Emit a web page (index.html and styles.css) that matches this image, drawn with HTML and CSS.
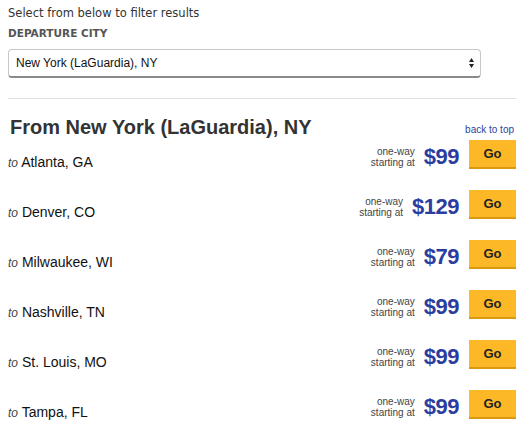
FILE: index.html
```html
<!DOCTYPE html>
<html>
<head>
<meta charset="utf-8">
<link rel="stylesheet" href="styles.css">
</head>
<body>
<div class="page">
  <p class="intro">Select from below to filter results</p>
  <div class="label">DEPARTURE CITY</div>
  <div class="select">
    <span>New York (LaGuardia), NY</span>
    <svg class="arrows" width="5" height="10" viewBox="0 0 5 10"><path d="M2.5 0 L5 4 L0 4 Z M0 6 L5 6 L2.5 10 Z" fill="#222"/></svg>
  </div>
  <hr class="rule">
  <div class="head">
    <h2>From New York (LaGuardia), NY</h2>
    <a class="top">back to top</a>
  </div>
  <ul class="list">
    <li class="row"><span class="dest"><i>to</i> Atlanta, GA</span><span class="fare"><span class="note">one-way<br>starting at</span><span class="price">$99</span><span class="go">Go</span></span></li>
    <li class="row"><span class="dest"><i>to</i> Denver, CO</span><span class="fare"><span class="note">one-way<br>starting at</span><span class="price">$129</span><span class="go">Go</span></span></li>
    <li class="row"><span class="dest"><i>to</i> Milwaukee, WI</span><span class="fare"><span class="note">one-way<br>starting at</span><span class="price">$79</span><span class="go">Go</span></span></li>
    <li class="row"><span class="dest"><i>to</i> Nashville, TN</span><span class="fare"><span class="note">one-way<br>starting at</span><span class="price">$99</span><span class="go">Go</span></span></li>
    <li class="row"><span class="dest"><i>to</i> St. Louis, MO</span><span class="fare"><span class="note">one-way<br>starting at</span><span class="price">$99</span><span class="go">Go</span></span></li>
    <li class="row"><span class="dest"><i>to</i> Tampa, FL</span><span class="fare"><span class="note">one-way<br>starting at</span><span class="price">$99</span><span class="go">Go</span></span></li>
  </ul>
</div>
</body>
</html>
```
FILE: styles.css
```css
html, body { margin: 0; padding: 0; background: #fff; }
body { font-family: "Liberation Sans", Arial, sans-serif; color: #222; }
.page { padding: 5px 15px 0 8px; }
.intro { margin: 0; font-family: "DejaVu Sans", Verdana, sans-serif; font-size: 11.5px; color: #333; line-height: 16px; }
.label { margin-top: 5px; font-family: "DejaVu Sans", Verdana, sans-serif; font-size: 10.5px; font-weight: bold; color: #555; line-height: 14px; }
.select { margin-top: 9px; width: 464px; height: 26px; border: 1px solid #c8c8c8; border-bottom: 2px solid #8a8a8a; border-radius: 4px; display: flex; align-items: center; justify-content: space-between; padding: 0 0 0 7px; box-sizing: content-box; font-size: 12px; color: #111; }
.select span { line-height: 26px; }
.arrows { margin-right: 6px; }
.rule { margin: 20px 0 0 0; border: 0; border-top: 1px solid #e0e0e0; height: 0; }
.head { display: flex; justify-content: space-between; align-items: flex-end; margin-top: 16px; }
.head h2 { margin: 0 0 0 2px; font-size: 20px; font-weight: bold; color: #333; line-height: 24px; }
.top { font-size: 10px; color: #2b3f9e; margin: 0 2px 4px 0; }
.list { list-style: none; margin: 0; padding: 0; }
.row { display: flex; justify-content: space-between; align-items: center; height: 50px; }
.row:first-child { margin-top: -10px; }
.dest { font-size: 14px; color: #111; padding-top: 16px; }
.dest i { font-size: 12px; color: #444; }
.fare { display: flex; align-items: center; }
.note { font-size: 10px; line-height: 11px; color: #444; text-align: right; margin: 6px 9px 0 0; }
.price { font-size: 22px; font-weight: bold; color: #2b3d9e; letter-spacing: -0.5px; margin: 6px 10px 0 0; }
.go { width: 47px; height: 27px; background: #fdb827; border-bottom: 2px solid #d99a10; display: flex; align-items: center; justify-content: center; font-size: 13px; font-weight: bold; color: #222; }
```
